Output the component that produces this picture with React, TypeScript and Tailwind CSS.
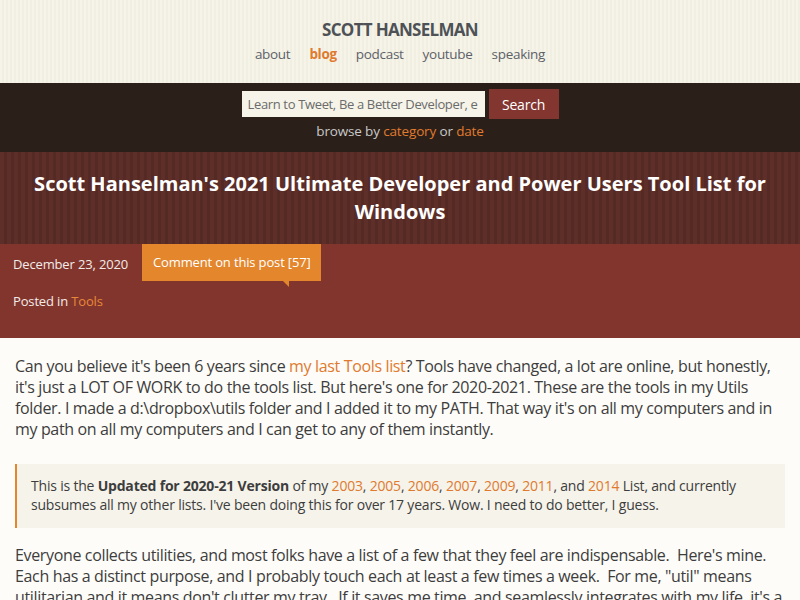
import React from "react";

const font = { fontFamily: '"Open Sans", "Noto Sans", sans-serif' };

function Header() {
  return (
    <header className="flex h-[83px] flex-col items-center bg-[#f6f4e8] bg-[repeating-linear-gradient(90deg,#f6f4e8_0px,#f6f4e8_2px,#f1efe2_2px,#f1efe2_4px)] pt-[19px]">
      <h1 className="text-[17px] font-bold leading-[22px] tracking-[-0.7px] text-[#4e5257]">SCOTT HANSELMAN</h1>
      <nav className="mt-[3px] flex gap-[19px] text-[13.5px] leading-[20px] tracking-[-0.3px] text-[#5d6168]">
        <a>about</a>
        <a className="font-bold text-[#e07a2e]">blog</a>
        <a>podcast</a>
        <a>youtube</a>
        <a>speaking</a>
      </nav>
    </header>
  );
}

function SearchBar() {
  return (
    <div className="flex h-[69px] flex-col items-center bg-[#2a2019] pt-[6px]">
      <div className="flex items-center gap-[4px]">
        <input
          readOnly
          value="Learn to Tweet, Be a Better Developer, e"
          className="h-[26px] w-[243px] bg-[#f6f4e8] px-[6px] text-[13px] tracking-[-0.35px] text-[#6b6b6b] outline-none"
          style={font}
        />
        <button className="h-[30px] w-[70px] bg-[#833530] text-[14px] tracking-[-0.2px] text-white">Search</button>
      </div>
      <p className="mt-[3px] text-[13.5px] leading-[18px] tracking-[-0.15px] text-[#c9c9c9]">
        browse by <a className="text-[#e07a2e]">category</a> or <a className="text-[#e07a2e]">date</a>
      </p>
    </div>
  );
}

function PostHeader() {
  return (
    <>
      <div className="flex h-[92px] items-center justify-center bg-[#5c2d27] bg-[repeating-linear-gradient(90deg,#5e2f29_0px,#5e2f29_4px,#552a24_4px,#552a24_7px)] px-[30px]">
        <h2 className="text-center text-[20px] font-bold leading-[28px] text-white">
          Scott Hanselman's 2021 Ultimate Developer and Power Users Tool List for Windows
        </h2>
      </div>
      <div className="h-[94px] bg-[#82352d] text-[13px] tracking-[-0.15px] text-[#f1ece8]">
        <div className="flex items-start">
          <span className="pl-[13px] pr-[14px] pt-[11px] leading-[18px]">December 23, 2020</span>
          <a className="relative flex h-[37px] items-center bg-[#e3862c] pl-[11px] pr-[10px] pt-[1px] text-white">
            Comment on this post [57]
            <span className="absolute bottom-[-6px] left-[141px] h-0 w-0 border-l-[6px] border-t-[6px] border-l-transparent border-t-[#e3862c]" />
          </a>
        </div>
        <p className="mt-[11px] px-[13px] leading-[18px]">
          Posted in <a className="text-[#e7893a]">Tools</a>
        </p>
      </div>
    </>
  );
}

function Body() {
  const link = "text-[#e07a2e]";
  return (
    <article className="bg-[#fdfcf8] px-[15px] pt-[18px] text-[16px] leading-[21px] tracking-[-0.35px] text-[#3d3d3d]">
      <p>
        Can you believe it's been 6 years since <a className={link}>my last Tools list</a>? Tools have changed, a lot are
        online, but honestly, it's just a LOT OF WORK to do the tools list. But here's one for 2020-2021. These are the
        tools in my Utils folder. I made a d:\dropbox\utils folder and I added it to my PATH. That way it's on all my
        computers and in my path on all my computers and I can get to any of them instantly.
      </p>
      <blockquote className="mt-[24px] border-l-2 border-[#e3862c] bg-[#f5f3ea] pb-[14px] pl-[14px] pr-[10px] pt-[12px] text-[14px] leading-[19px] tracking-[-0.2px] text-[#3d3d3d]">
        This is the <b>Updated for 2020-21 Version</b> of my <a className={link}>2003</a>, <a className={link}>2005</a>,{" "}
        <a className={link}>2006</a>, <a className={link}>2007</a>, <a className={link}>2009</a>,{" "}
        <a className={link}>2011</a>, and <a className={link}>2014</a> List, and currently subsumes all my other lists.
        I've been doing this for over 17 years. Wow. I need to do better, I guess.
      </blockquote>
      <p className="mt-[17px]">
        Everyone collects utilities, and most folks have a list of a few that they feel are indispensable.&nbsp; Here's
        mine. Each has a distinct purpose, and I probably touch each at least a few times a week.&nbsp; For me, "util"
        means utilitarian and it means don't clutter my tray.&nbsp; If it saves me time, and seamlessly integrates with
        my life, it's a good utility.
      </p>
    </article>
  );
}

export default function App() {
  return (
    <div className="h-[600px] overflow-hidden bg-[#fdfcf8]" style={font}>
      <Header />
      <SearchBar />
      <PostHeader />
      <Body />
    </div>
  );
}
